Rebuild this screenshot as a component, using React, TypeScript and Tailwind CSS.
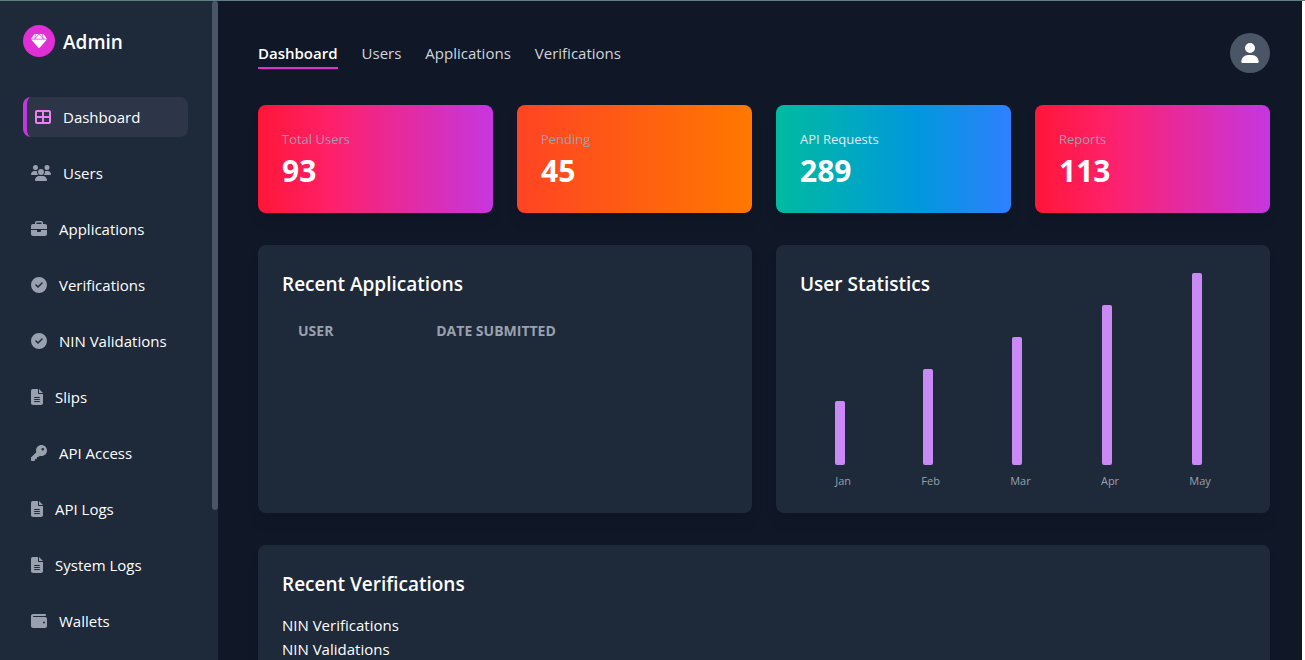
import { FaBriefcase, FaCircleCheck, FaFileLines, FaKey, FaTableCellsLarge, FaUser, FaUsers, FaWallet } from "react-icons/fa6";
import type { IconType } from "react-icons";

type NavItem = { label: string; icon: IconType; size: string; active?: boolean };

const navItems: NavItem[] = [
  { label: "Dashboard", icon: FaTableCellsLarge, size: "w-4", active: true },
  { label: "Users", icon: FaUsers, size: "w-5" },
  { label: "Applications", icon: FaBriefcase, size: "w-4" },
  { label: "Verifications", icon: FaCircleCheck, size: "w-4" },
  { label: "NIN Validations", icon: FaCircleCheck, size: "w-4" },
  { label: "Slips", icon: FaFileLines, size: "w-3" },
  { label: "API Access", icon: FaKey, size: "w-4" },
  { label: "API Logs", icon: FaFileLines, size: "w-3" },
  { label: "System Logs", icon: FaFileLines, size: "w-3" },
  { label: "Wallets", icon: FaWallet, size: "w-4" },
];

const tabs = ["Dashboard", "Users", "Applications", "Verifications"];

const stats = [
  { label: "Total Users", value: 93, fill: "from-[#ff1637] via-[#ff2068] via-30% to-[#c636e0]", tone: "text-gray-400" },
  { label: "Pending", value: 45, fill: "from-[#ff4423] to-[#ff7800]", tone: "text-gray-400" },
  { label: "API Requests", value: 289, fill: "from-[#00bba0] via-[#0098dc] via-60% to-[#2f80ff]", tone: "text-gray-200" },
  { label: "Reports", value: 113, fill: "from-[#ff1637] via-[#ff2068] via-30% to-[#c636e0]", tone: "text-gray-400" },
];

const months = [
  { label: "Jan", height: "h-16" },
  { label: "Feb", height: "h-24" },
  { label: "Mar", height: "h-32" },
  { label: "Apr", height: "h-40" },
  { label: "May", height: "h-48" },
];

const panel = "rounded-lg bg-gray-800 p-6 shadow-lg";
const panelTitle = "mb-3.5 text-[19px] leading-[30px] font-semibold";

function GemIcon() {
  return (
    <svg viewBox="0 0 16 16" className="size-4" fill="currentColor" aria-hidden="true">
      <path d="M3.4 1H4.4L3.4 5.8H0.1Z" />
      <path d="M5 1H7.6L4.2 5Z" />
      <path d="M8 1.5L11.7 5.8H4.3Z" />
      <path d="M8.4 1H11L11.8 5Z" />
      <path d="M11.6 1H12.6L15.9 5.8H12.6Z" />
      <path d="M0.1 6.6H15.9L8.6 14.7Q8 15.2 7.4 14.7Z" />
    </svg>
  );
}

function Sidebar() {
  return (
    <aside className="flex w-[218px] shrink-0 bg-gray-800">
      <div className="min-w-0 flex-1 py-6 pr-6 pl-[23px]">
        <div className="mb-10 flex items-center gap-2">
          <span className="flex size-8 items-center justify-center rounded-full bg-[#e12fd6]">
            <GemIcon />
          </span>
          <span className="pt-0.5 text-[19px] leading-[30px] font-semibold">Admin</span>
        </div>
        <nav className="flex flex-col gap-4">
          {navItems.map(({ label, icon: Icon, size, active }) => (
            <a
              key={label}
              href="#"
              className={
                active
                  ? "flex items-center gap-3 rounded-lg border-l-4 border-[#c636e0] bg-[#2d3648] p-2 whitespace-nowrap"
                  : "flex items-center gap-3 rounded-lg p-2 whitespace-nowrap"
              }
            >
              <Icon className={`${size} h-4 shrink-0 ${active ? "text-[#ed80f5]" : "text-gray-400"}`} />
              {label}
            </a>
          ))}
        </nav>
      </div>
      <div className="w-1.5 shrink-0">
        <div className="h-[509px] rounded-full bg-gray-600" />
      </div>
    </aside>
  );
}

export default function App() {
  return (
    <div className="h-screen overflow-hidden border-t border-[#5f7f80] bg-white pr-[3px] font-['Open_Sans',sans-serif] text-[15px] leading-6 text-white">
      <div className="flex h-full bg-gray-900">
        <Sidebar />
        <main className="min-w-0 flex-1 overflow-hidden py-8 pr-8 pl-10">
          <header className="mb-8 flex items-center justify-between">
            <nav className="flex gap-6">
              {tabs.map((tab, i) => (
                <a
                  key={tab}
                  href="#"
                  className={
                    i === 0
                      ? "border-b-2 border-[#e12fd6] pt-1 pb-0.5 font-semibold"
                      : "border-b-2 border-transparent pt-1 pb-0.5 text-gray-300"
                  }
                >
                  {tab}
                </a>
              ))}
            </nav>
            <button type="button" aria-label="Profile" className="flex size-10 items-center justify-center rounded-full bg-gray-600">
              <FaUser className="size-5" />
            </button>
          </header>

          <section className="mb-8 grid grid-cols-4 gap-6">
            {stats.map((s) => (
              <div key={s.label} className={`rounded-lg bg-linear-to-r/srgb p-6 shadow-lg ${s.fill}`}>
                <p className={`text-[13px] leading-5 ${s.tone}`}>{s.label}</p>
                <p className="mt-1 text-[30px] leading-9 font-bold">{s.value}</p>
              </div>
            ))}
          </section>

          <section className="mb-8 grid grid-cols-2 gap-6">
            <div className={panel}>
              <h2 className={panelTitle}>Recent Applications</h2>
              <table className="w-full table-fixed text-left text-[14px] leading-5 text-gray-400 uppercase">
                <thead>
                  <tr>
                    <th className="w-[31%] px-4 py-2 font-bold">User</th>
                    <th className="px-4 py-2 font-bold">Date Submitted</th>
                  </tr>
                </thead>
              </table>
            </div>
            <div className={panel}>
              <h2 className={panelTitle}>User Statistics</h2>
              <div className="flex h-44 items-end justify-around">
                {months.map((m) => (
                  <div key={m.label} className="flex flex-col items-center">
                    <div className={`mr-1.5 w-2.5 rounded-xs bg-[#c98af5] ${m.height}`} />
                    <span className="mt-2 text-[11px] leading-4 text-gray-400">{m.label}</span>
                  </div>
                ))}
              </div>
            </div>
          </section>

          <section className={panel}>
            <h2 className={panelTitle}>Recent Verifications</h2>
            <p>NIN Verifications</p>
            <p>NIN Validations</p>
          </section>
        </main>
      </div>
    </div>
  );
}
